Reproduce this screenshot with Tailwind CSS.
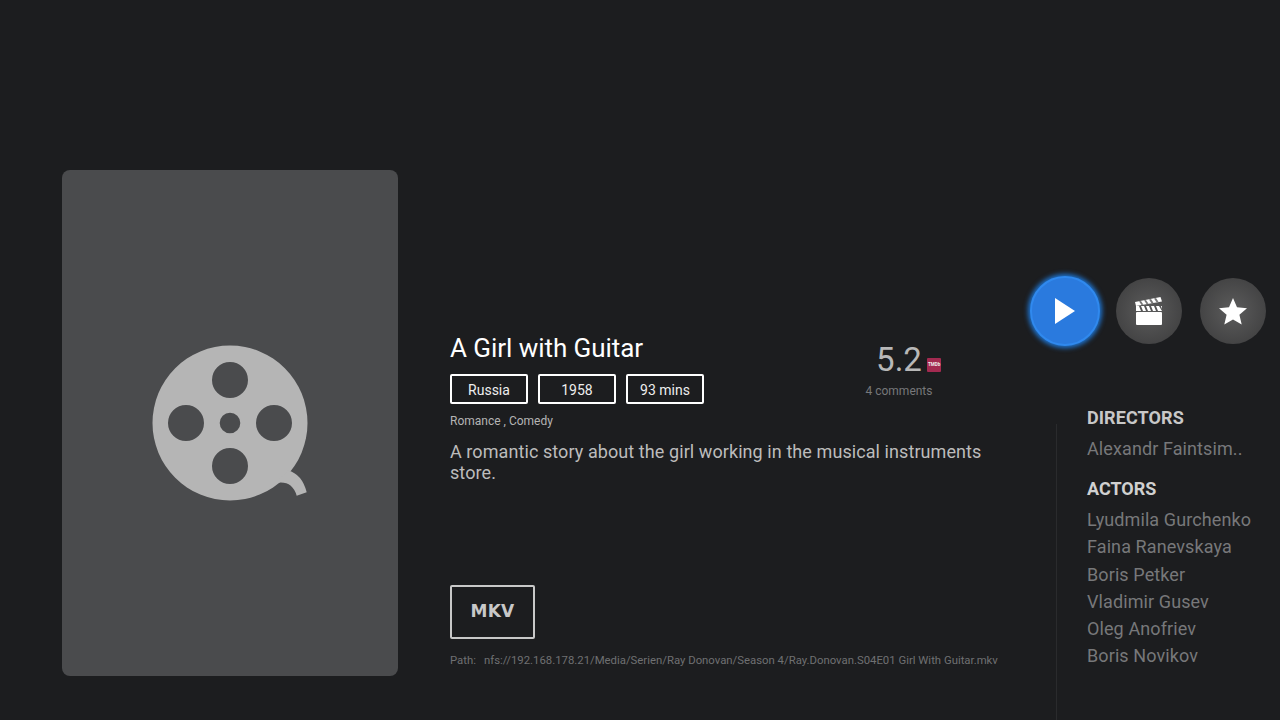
<!DOCTYPE html>
<html>
<head>
<meta charset="utf-8">
<script src="https://cdn.jsdelivr.net/npm/@tailwindcss/browser@4"></script>
</head>
<body class="m-0">
<div class="flex items-start w-[1280px] h-[720px] overflow-hidden bg-[#1c1d1f] font-['Roboto',sans-serif]">
  <div class="ml-[62px] mt-[170px] w-[336px] h-[506px] shrink-0 rounded-lg bg-[#4a4b4d] flex items-center justify-center">
    <svg class="w-[160px] h-[160px]" viewBox="0 0 160 160">
      <path fill="#b5b5b5" fill-rule="evenodd" d="M80 2.500a77.500 77.500 0 1 0 0 155a77.500 77.500 0 1 0 0-155zM80 19a18 18 0 1 1 0 36a18 18 0 1 1 0-36zM80 105a18 18 0 1 1 0 36a18 18 0 1 1 0-36zM36 62a18 18 0 1 1 0 36a18 18 0 1 1 0-36zM124 62a18 18 0 1 1 0 36a18 18 0 1 1 0-36zM80 69.700a10.300 10.300 0 1 1 0 20.600a10.300 10.300 0 1 1 0-20.600z"/>
      <path fill="#b5b5b5" d="M138 127.500Q152 131 156.700 149.300L146.700 152.700Q142 137 126 140Z"/>
    </svg>
  </div>
  <div class="ml-[52px] w-[578px] shrink-0 pt-[333px]">
    <div class="flex items-start">
      <div class="w-[415px] shrink-0">
        <h1 class="text-[26px] leading-[30px] font-normal tracking-[-0.05px] text-white">A Girl with Guitar</h1>
        <div class="flex gap-[10px] mt-[11px]">
          <div class="w-[78px] h-[30px] pt-[2px] border-2 border-white rounded-[2px] flex items-center justify-center text-[14px] text-[#eeeeee]">Russia</div>
          <div class="w-[78px] h-[30px] pt-[2px] border-2 border-white rounded-[2px] flex items-center justify-center text-[14px] text-[#eeeeee]">1958</div>
          <div class="w-[78px] h-[30px] pt-[2px] border-2 border-white rounded-[2px] flex items-center justify-center text-[14px] text-[#eeeeee]">93 mins</div>
        </div>
        <p class="mt-[9px] text-[12px] leading-[16px] text-[#b4b4b4]">Romance , Comedy</p>
      </div>
      <div class="w-[68px] flex flex-col items-center">
        <div class="relative text-[33px] leading-[38px] text-[#b8b8b8] mt-[8px]">5.2
          <span class="absolute left-[51px] top-[17px] w-[14px] h-[14px] bg-[#a32a50] rounded-[1px] flex items-center justify-center text-[4.500px] font-bold text-[#eeeeee]">TMDb</span>
        </div>
        <p class="mt-[4px] text-[12px] leading-[16px] whitespace-nowrap text-[#77787a]">4 comments</p>
      </div>
    </div>
    <p class="mt-[12px] w-[550px] text-[18px] leading-[21px] tracking-[0.08px] text-[#bcbcbc]">A romantic story about the girl working in the musical instruments store.</p>
    <div class="mt-[102px] w-[85px] h-[54px] border-2 border-[#c8c8c8] rounded-[2px] flex items-center justify-center text-[17px] font-bold tracking-[0.3px] text-[#c8c8c8] font-['DejaVu_Sans',sans-serif]">MKV</div>
    <p class="mt-[14px] text-[11.350px] leading-[14px] whitespace-nowrap text-[#6f7072]"><span class="mr-[8px]">Path:</span>nfs://192.168.178.21/Media/Serien/Ray Donovan/Season 4/Ray.Donovan.S04E01 Girl With Guitar.mkv</p>
  </div>
  <div class="w-[252px] shrink-0 pt-[276px] h-[720px] flex flex-col">
    <div class="flex items-center h-[70px]">
      <div class="ml-[2px] w-[70px] h-[70px] rounded-full bg-[#2a7ade] border-[2px] border-[#3089ee] shadow-[0_0_5px_2px_#1f78d8] flex items-center justify-center shrink-0">
        <svg class="w-[20px] h-[26px]" viewBox="0 0 20 26"><path fill="#fff" d="M0 0L20 13L0 26Z"/></svg>
      </div>
      <div class="ml-[16px] w-[66px] h-[66px] rounded-full bg-[radial-gradient(circle,#5c5c5c,#3a3a3b)] flex items-center justify-center shrink-0">
        <svg class="w-[28px] h-[30px]" viewBox="0 0 28 30">
          <rect x="1" y="16" width="26" height="13" rx="1" fill="#fff"/>
          <rect x="1" y="10" width="26" height="5" fill="#fff"/>
          <path fill="#555" d="M4 10h2l2 5H6zM9 10h2l2 5h-2zM14 10h2l2 5h-2zM19 10h2l2 5h-2zM24 10h2l1 3v2z"/>
          <path fill="#fff" d="M0 6L25.500 1L27 5.500L1 10Z"/>
          <path fill="#777" d="M4 5.300l2-.4 2.500 3.800-2 .4zM9 4.300l2-.4 2.500 3.800-2 .4zM14 3.400l2-.4 2.500 3.800-2 .4zM19 2.400l2-.4 2.500 3.800-2 .4z"/>
        </svg>
      </div>
      <div class="ml-[18px] w-[66px] h-[66px] rounded-full bg-[radial-gradient(circle,#5c5c5c,#3a3a3b)] flex items-center justify-center shrink-0">
        <svg class="w-[30px] h-[28px]" viewBox="0 0 30 28"><path fill="#fff" d="M15 1l4 9.300 10 .9-7.600 6.600 2.300 9.800L15 22.400 6.300 27.600l2.300-9.800L1 11.200l10-.9z"/></svg>
      </div>
    </div>
    <div class="flex flex-1 mt-[61px] ml-[28px] min-h-0">
      <div class="w-px bg-[#2a2b2d] mt-[17px] shrink-0"></div>
      <div class="ml-[30px]">
        <h2 class="text-[18px] leading-[21px] font-bold tracking-[0.08px] text-[#c8c8c8]">DIRECTORS</h2>
        <p class="mt-[10px] text-[18px] leading-[21px] tracking-[0.1px] text-[#77787a] whitespace-nowrap">Alexandr Faintsim..</p>
        <h2 class="mt-[19px] text-[18px] leading-[21px] font-bold text-[#d0d0d0]">ACTORS</h2>
        <div class="mt-[10px] flex flex-col gap-[6.300px] text-[18px] leading-[21px] tracking-[0.1px] text-[#77787a] whitespace-nowrap">
          <p>Lyudmila Gurchenko</p>
          <p>Faina Ranevskaya</p>
          <p>Boris Petker</p>
          <p>Vladimir Gusev</p>
          <p>Oleg Anofriev</p>
          <p>Boris Novikov</p>
        </div>
      </div>
    </div>
  </div>
</div>
</body>
</html>
